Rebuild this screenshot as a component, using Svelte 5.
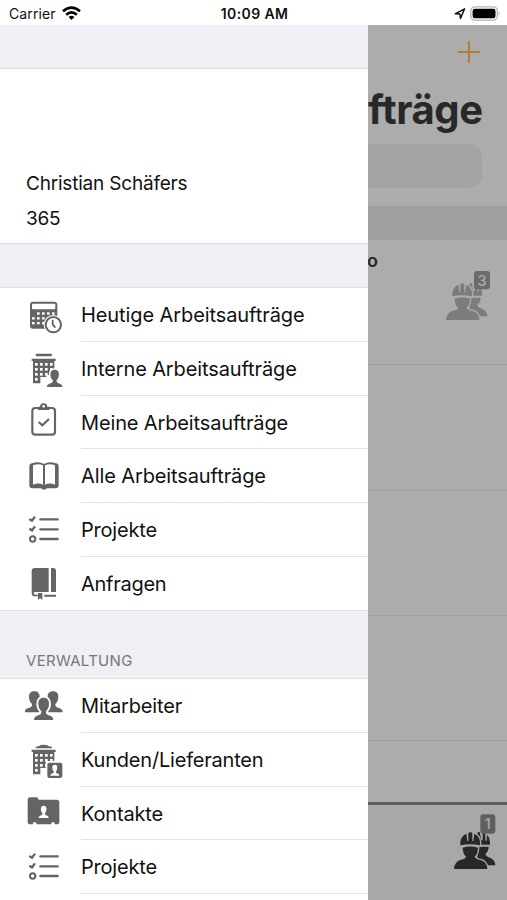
<script>
  const main = [
    { icon: 'calendar', label: 'Heutige Arbeitsaufträge', ls: -0.09 },
    { icon: 'building', label: 'Interne Arbeitsaufträge', ls: -0.12 },
    { icon: 'clipboard', label: 'Meine Arbeitsaufträge', ls: -0.14 },
    { icon: 'book', label: 'Alle Arbeitsaufträge', ls: -0.11 },
    { icon: 'list', label: 'Projekte', ls: -0.2 },
    { icon: 'notebook', label: 'Anfragen', ls: -0.27 }
  ];
  const admin = [
    { icon: 'team', label: 'Mitarbeiter', ls: -0.17 },
    { icon: 'office', label: 'Kunden/Lieferanten', ls: -0.2 },
    { icon: 'folder', label: 'Kontakte', ls: -0.17 },
    { icon: 'list', label: 'Projekte', ls: -0.2 }
  ];
  const windows = [0, 1, 2, 3].flatMap((c) => [0, 1, 2].map((r) => [c, r]));
</script>

{#snippet bust()}
  <path d="M0-30C-11-30-17-23-16-12C-16-3-12 4-7 8C-6 16-11 18-18 20C-26 23-29 26-29 33H29C29 26 26 23 18 20C11 18 6 16 7 8C12 4 16-3 16-12C17-23 11-30 0-30Z" />
{/snippet}

{#snippet tower()}
  <path d="M20 29H92V36H88V78H64V84H46V103H24V36H20Z" />
  {#each windows as [c, r]}
    <rect x={30 + c * 15} y={42 + r * 15} width="8" height="8" fill="#fff" />
  {/each}
  <rect x="30" y="87" width="8" height="8" fill="#fff" />
{/snippet}

{#snippet glyph(name)}
  <svg class="icon" viewBox="0 0 120 120" aria-hidden="true">
    {#if name === 'calendar'}
      <rect x="15" y="20" width="82" height="81" rx="9" />
      <rect x="21" y="26" width="70" height="17" rx="3" fill="#fff" />
      {#each [[2,0],[3,0],[4,0],[0,1],[1,1],[2,1],[3,1],[0,2],[1,2],[2,2],[1,0]] as [c, r]}
        <rect x={21 + c * 15} y={52 + r * 14.5} width="8" height="7" fill="#fff" />
      {/each}
      <circle cx="85" cy="89" r="29" fill="#fff" />
      <circle cx="85" cy="89" r="23" fill="#fff" stroke="#646464" stroke-width="6" />
      <path d="M83 74V88L91 98" fill="none" stroke="#646464" stroke-width="5.5" />
    {:else if name === 'building'}
      <rect x="32" y="14" width="49" height="8" rx="3" />
      {@render tower()}
      <g transform="translate(89 87) scale(.79 .82)" stroke="#fff" stroke-width="12">{@render bust()}</g>
      <g transform="translate(89 87) scale(.79 .82)">{@render bust()}</g>
    {:else if name === 'clipboard'}
      <rect x="22" y="18" width="68" height="80" rx="9" fill="none" stroke="#646464" stroke-width="6.500" />
      <path d="M39 14H45Q46 4 56 4Q66 4 67 14H73V24H39Z" />
      <circle cx="56" cy="13" r="4" fill="#fff" />
      <path d="M41 60L52 70L72 51" fill="none" stroke="#646464" stroke-width="6.500" />
    {:else if name === 'book'}
      <path d="M21 22Q13 23 13 32V88Q13 97 22 97H48Q51 101 57 101Q63 101 66 97H92Q101 97 101 88V32Q101 23 93 22Q72 14 57 24Q42 14 21 22Z" />
      <path d="M24 28Q40 22 54 28V86Q40 79 24 86ZM60 28Q75 22 90 28V86Q75 79 60 86Z" fill="#fff" />
    {:else if name === 'list'}
      <path d="M46 28H98M46 58H98M46 87H98" fill="none" stroke="#646464" stroke-width="7" stroke-linecap="round" />
      <path d="M13 27L21 32L30 20M13 56L21 61L30 49" fill="none" stroke="#646464" stroke-width="7" />
      <circle cx="23" cy="87" r="8" fill="none" stroke="#646464" stroke-width="6" />
    {:else if name === 'notebook'}
      <path d="M29 15H71V87H31Q26 87 26 91Q26 95 32 95H39V100H30Q20 100 20 89V24Q20 15 29 15Z" />
      <path d="M78 15H84Q93 15 93 24V87H78ZM58 95H93V101H58ZM39 90H52V111L45.500 105L39 111Z" />
    {:else if name === 'team'}
      <g transform="translate(28 46)">{@render bust()}</g>
      <g transform="translate(84 46)">{@render bust()}</g>
      <g transform="translate(56 67) scale(1 1.06)" stroke="#fff" stroke-width="11">{@render bust()}</g>
      <g transform="translate(56 67) scale(1 1.06)">{@render bust()}</g>
    {:else if name === 'office'}
      <path d="M32 22Q34 19 42 18Q45 14 56 14Q67 14 70 18Q79 19 81 22V25H32Z" />
      {@render tower()}
      <rect x="62" y="63" width="56" height="56" fill="#fff" />
      <rect x="67" y="68" width="45" height="46" rx="6" />
      <g transform="translate(89.500 90) scale(.46 .52)" fill="#fff">{@render bust()}</g>
    {:else if name === 'folder'}
      <path d="M16 13H34Q39 13 41 20H95Q103 20 103 28V86Q103 94 95 94H90Q89 87 84 87Q79 87 78 94H35Q34 87 29 87Q24 87 23 94H16Q8 94 8 86V21Q8 13 16 13Z" />
      <g transform="translate(56 56) scale(.52 .58)" fill="#fff">{@render bust()}</g>
    {/if}
  </svg>
{/snippet}

{#snippet rows(items)}
  <ul>
    {#each items as item}
      <li>
        {@render glyph(item.icon)}
        <span class="label" style="letter-spacing:{item.ls}px">{item.label}</span>
      </li>
    {/each}
  </ul>
{/snippet}

{#snippet front()}
  <path d="M67 109V101Q68 81 85 74L88 96H91V73Q91 70 97 70Q103 70 103 73V96H106L109 74Q126 82 126 101V109Q97 103 67 109Z" />
  <path d="M74 116Q97 109 120 116Q120 133 110 143Q111 149 128 153Q147 158 148 180H48Q49 158 69 152Q84 149 84 143Q74 133 74 116Z" />
{/snippet}

{#snippet workers(tone, ground, count, bx, by, bw, bh, badge, ink)}
  <svg class="workers" viewBox="0 0 231 210" fill={tone}>
    <path d="M118 72Q122 68 125 68L130 94H134V69Q139 69 142 73V95H146L147 77Q156 86 156 99V107H118Z" />
    <path d="M118 113H152Q152 126 142 135Q142 141 152 145Q171 151 172 169H118Z" />
    <g stroke={ground} stroke-width="8" fill={ground}>{@render front()}</g>
    {@render front()}
    <rect x={bx} y={by} width={bw} height={bh} rx="9" fill={badge} />
    <text x={bx + bw / 2} y={by + bh / 2 + 16} text-anchor="middle" fill={ink}>{count}</text>
  </svg>
{/snippet}

<div class="screen">
  <header class="status">
    <div class="carrier">
      <span>Carrier</span>
      <svg width="19" height="15" viewBox="0 0 19 15">
        <g fill="none" stroke="#000" stroke-width="2.600">
          <path d="M1 5.300Q9.500-2.200 18 5.300" /><path d="M4.200 8.700Q9.500 3.900 14.800 8.700" />
        </g>
        <path d="M6.600 11Q9.500 8.400 12.400 11L9.500 14Z" />
      </svg>
    </div>
    <span class="time">10:09 AM</span>
    <div class="power">
      <svg width="12" height="13" viewBox="0 0 12 13"><path d="M1.200 6.800L10.600 1.800L6.500 11.500L5.900 7Z" fill="none" stroke="#111" stroke-width="1.500" stroke-linejoin="round" /></svg>
      <svg width="31" height="15" viewBox="0 0 31 15">
        <rect x=".8" y=".9" width="26.500" height="13.200" rx="4" fill="#fff" stroke="#b5b5b5" stroke-width="1.300" />
        <rect x="2.600" y="2.700" width="22.900" height="9.600" rx="2.200" /><path d="M28.600 5.500Q31 7.500 28.600 9.500Z" fill="#b5b5b5" />
      </svg>
    </div>
  </header>

  <div class="body">
    <aside>
      <div class="band top"></div>
      <section class="profile"><p>Christian Schäfers</p><p>365</p></section>
      <div class="band mid"></div>
      {@render rows(main)}
      <div class="band heading"><h2>VERWALTUNG</h2></div>
      {@render rows(admin)}
    </aside>

    <main>
      <nav><svg width="22" height="22" viewBox="0 0 22 22"><path d="M11 0V22M0 11H22" stroke="#b07f32" stroke-width="2" /></svg></nav>
      <h1>fträge</h1>
      <div class="search"></div>
      <div class="section"></div>
      <div class="entry first">
        <b>o</b>
        {@render workers('#7c7c7c', '#acacac', '3', 132, 33, 48, 55, '#6b6b6b', '#acacac')}
      </div>
      <div class="entry"></div>
      <div class="entry"></div>
      <div class="entry"></div>
      <div class="entry last"></div>
      <footer>{@render workers('#282828', '#a8a8aa', '1', 127, 16, 45, 58, '#606060', '#a8a8aa')}</footer>
    </main>
  </div>
</div>

<style>
  :global(body) { margin: 0; overflow: hidden; }
  * { box-sizing: border-box; }
  .screen { width: 507px; height: 900px; display: flex; flex-direction: column; overflow: hidden; background: #fff; font-family: Inter, "Liberation Sans", sans-serif; color: #111; }
  .status { height: 25px; flex: none; display: grid; grid-template-columns: 1fr auto 1fr; align-items: center; padding: 2px 6px 0 9px; font-size: 14px; }
  .carrier, .power { display: flex; align-items: center; gap: 6px; }
  .carrier { letter-spacing: .12px; }
  .power { justify-content: flex-end; gap: 4px; }
  .time { font-weight: 600; font-size: 14px; letter-spacing: .4px; margin-right: 1px; }
  .body { display: flex; flex: 1; min-height: 0; }
  aside { width: 368px; flex: none; overflow: hidden; }
  .band { background: #f0eff5; border-bottom: 1px solid #dfdee3; }
  .top { height: 44px; }
  .profile { height: 174px; padding: 97px 26px 0; }
  p { margin: 0; height: 35px; line-height: 35px; font-size: 19px; letter-spacing: -.2px; }
  .mid { height: 45.300px; border-top: 1px solid #dfdee3; }
  .heading { height: 69px; border-top: 1px solid #dfdee3; display: flex; align-items: flex-end; padding: 0 26px 8px; }
  h2 { margin: 0; font-size: 15px; line-height: 19px; font-weight: 400; letter-spacing: .3px; color: #77767b; }
  ul { list-style: none; margin: 0; padding: 0; }
  li { height: 53.67px; padding-left: 25px; display: flex; align-items: center; }
  .icon { width: 40px; height: 40px; flex: none; fill: #646464; }
  .label { flex: 1; align-self: stretch; margin-left: 16px; line-height: 54px; height: 53.67px; font-size: 20px; white-space: nowrap; border-bottom: 1px solid #e2e2e4; }
  li:last-child .label { border-bottom-color: transparent; }
  ul:last-child li:last-child .label { border-bottom-color: #e2e2e4; }
  main { flex: 1; min-width: 0; background: #acacac; overflow: hidden; display: flex; flex-direction: column; }
  nav { height: 54px; flex: none; display: flex; justify-content: flex-end; padding: 16px 27px 0 0; }
  h1 { margin: 0 26px 0 0; height: 65px; flex: none; line-height: 61px; font-size: 40px; font-weight: 700; letter-spacing: -.4px; color: #282828; text-align: right; white-space: nowrap; }
  .search { height: 44px; flex: none; margin-right: 25px; background: #a3a3a3; border-radius: 0 13px 13px 0; }
  .section { height: 34px; flex: none; margin-top: 18px; background: #9f9f9f; }
  .entry { height: 125.300px; flex: none; border-bottom: 1px solid #a0a0a0; display: flex; }
  .first { justify-content: space-between; padding-top: 20px; }
  b { width: 12px; margin: -9px 0 0 -1px; height: 20px; line-height: 20px; font-size: 18px; font-weight: 600; color: #282828; }
  .last { height: 61.300px; border: 0; }
  .workers { width: 77px; height: 70px; flex: none; }
  .workers text { font: 500 43px Inter, sans-serif; }
  footer { flex: 1; border-top: 3px solid #606060; background: #a8a8aa; display: flex; justify-content: flex-end; padding-top: 4px; }
  footer :global(.workers) { margin-right: -7.600px; }
</style>
